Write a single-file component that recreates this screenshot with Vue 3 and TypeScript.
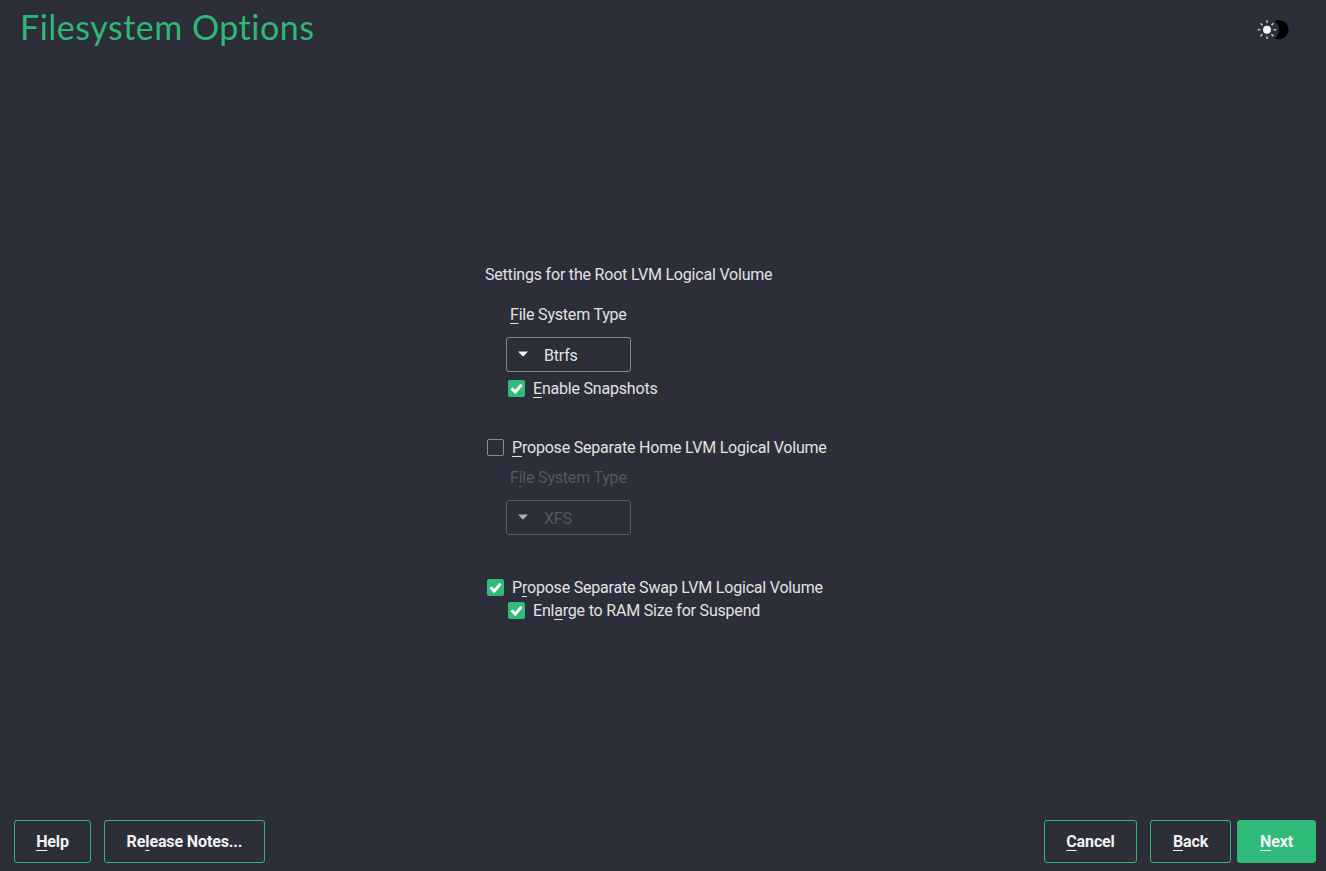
<script setup lang="ts">
import { ref } from 'vue'

const snapshots = ref(true)
const home = ref(false)
const swap = ref(true)
const enlarge = ref(true)
</script>

<template>
  <div class="page">
    <header class="top">
      <h1>Filesystem <span>Options</span></h1>
      <svg class="theme" width="34" height="24" viewBox="0 0 34 24">
        <path d="M18.800 3.200A9.500 9.500 0 1 1 18.800 20.200A10.500 10.500 0 0 0 18.800 3.200z" fill="#000" />
        <circle cx="11" cy="11.700" r="4" fill="#f4f4f4" />
        <path
          d="M11 2.300v2.500M11 18.600v2.500M1.700 11.700h2.700M17.600 11.700h2.700M4.500 5.200l2 2M15.500 16.200l2 2M4.500 18.200l2-2M15.500 7.200l2-2"
          stroke="#c4c4c9" stroke-width="1.600"
        />
      </svg>
    </header>

    <main class="form">
      <p class="line intro">Settings for the Root LVM Logical Volume</p>
      <p class="line fst"><u>F</u>ile System Type</p>
      <div class="select">
        <svg width="10" height="6" viewBox="0 0 10 6"><path d="M0 .5h10L6 4.700Q5 5.700 4 4.700z" fill="#f2f2f2" /></svg>
        <span>Btrfs</span>
      </div>
      <div class="line check sub snap" @click="snapshots = !snapshots">
        <i class="box" :class="{ on: snapshots }"><svg v-if="snapshots" viewBox="0 0 17 17"><path d="M3.500 8.300l3.700 3.700 6.400-7.200" /></svg></i>
        <span><u>E</u>nable Snapshots</span>
      </div>

      <div class="line check home" @click="home = !home">
        <i class="box" :class="{ on: home }"><svg v-if="home" viewBox="0 0 17 17"><path d="M3.500 8.300l3.700 3.700 6.400-7.200" /></svg></i>
        <span><u>P</u>ropose Separate Home LVM Logical Volume</span>
      </div>
      <p class="line fst2">F<u>i</u>le System Type</p>
      <div class="select off">
        <svg width="10" height="6" viewBox="0 0 10 6"><path d="M0 .5h10L6 4.700Q5 5.700 4 4.700z" fill="#b0b0b3" /></svg>
        <span>XFS</span>
      </div>

      <div class="line check swap" @click="swap = !swap">
        <i class="box" :class="{ on: swap }"><svg v-if="swap" viewBox="0 0 17 17"><path d="M3.500 8.300l3.700 3.700 6.400-7.200" /></svg></i>
        <span>P<u>r</u>opose Separate Swap LVM Logical Volume</span>
      </div>
      <div class="line check sub enl" @click="enlarge = !enlarge">
        <i class="box" :class="{ on: enlarge }"><svg v-if="enlarge" viewBox="0 0 17 17"><path d="M3.500 8.300l3.700 3.700 6.400-7.200" /></svg></i>
        <span>Enl<u>a</u>rge to RAM Size for Suspend</span>
      </div>
    </main>

    <footer class="bar">
      <button class="help"><u>H</u>elp</button>
      <button class="notes">Re<u>l</u>ease Notes...</button>
      <button class="cancel"><u>C</u>ancel</button>
      <button class="back"><u>B</u>ack</button>
      <button class="next"><u>N</u>ext</button>
    </footer>
  </div>
</template>

<style>
body { background: #2c2e39; overflow: hidden; }
</style>

<style scoped>
.page {
  width: 1326px; height: 871px; box-sizing: border-box;
  display: flex; flex-direction: column;
  background: #2c2e39; color: #e2e2e4;
  font: 16px/20px Roboto, sans-serif; letter-spacing: -0.200px;
}
.top { height: 265px; flex: none; display: flex; justify-content: space-between; align-items: flex-start; padding: 0 36px 0 20px; box-sizing: border-box; }
h1 { margin: 7px 0 0; font: 400 34px/40px Lato, sans-serif; letter-spacing: 0.500px; color: #2fb777; white-space: pre; }
.theme { margin-top: 18px; }
.form { flex: 1; padding-left: 485px; white-space: nowrap; }
.line { margin: 0; height: 20px; }
u { text-decoration: underline; text-decoration-thickness: 1.300px; text-underline-offset: 3px; text-decoration-skip-ink: none; }
.fst { margin: 20px 0 0 25px; }
.select {
  box-sizing: border-box; width: 125px; height: 35px; margin: 12px 0 0 21px; padding-left: 11px;
  border: 1px solid #87878b; border-radius: 3px; display: flex; align-items: center; gap: 16px;
}
.select span { padding-top: 2px; }
.select svg { margin-top: -1px; }
.select.off { border-color: #5a5b64; color: #555761; }
.check { display: flex; align-items: center; gap: 8px; padding-left: 2px; }
.check span { padding-top: 1px; }
.sub { padding-left: 23px; }
.box { box-sizing: border-box; width: 17px; height: 17px; border: 1px solid #8c8c90; border-radius: 2px; display: block; flex: none; }
.box.on { border: 0; background: #31bb7b; }
.box svg { display: block; width: 17px; height: 17px; }
.box path { fill: none; stroke: #fff; stroke-width: 3; }
.snap { margin-top: 6px; }
.home { margin-top: 39px; }
.fst2 { margin: 11px 0 0 25px; color: #555761; }
.swap { margin-top: 42px; }
.enl { margin-top: 3px; }
.bar { display: flex; align-items: flex-start; height: 51px; padding-left: 14px; }
button {
  box-sizing: border-box; height: 43px; padding: 0; border: 1px solid #2fb777; border-radius: 3px;
  background: transparent; color: #f2f2f3; font: 700 16px/20px Roboto, sans-serif; letter-spacing: -0.120px; white-space: nowrap;
}
.help { width: 77px; margin-right: 13px; }
.notes { width: 161px; margin-right: auto; }
.cancel { width: 93px; margin-right: 13px; }
.back { width: 81px; margin-right: 6px; }
.next { width: 79px; margin-right: 10px; background: #31bb7b; border-color: #31bb7b; }
</style>
